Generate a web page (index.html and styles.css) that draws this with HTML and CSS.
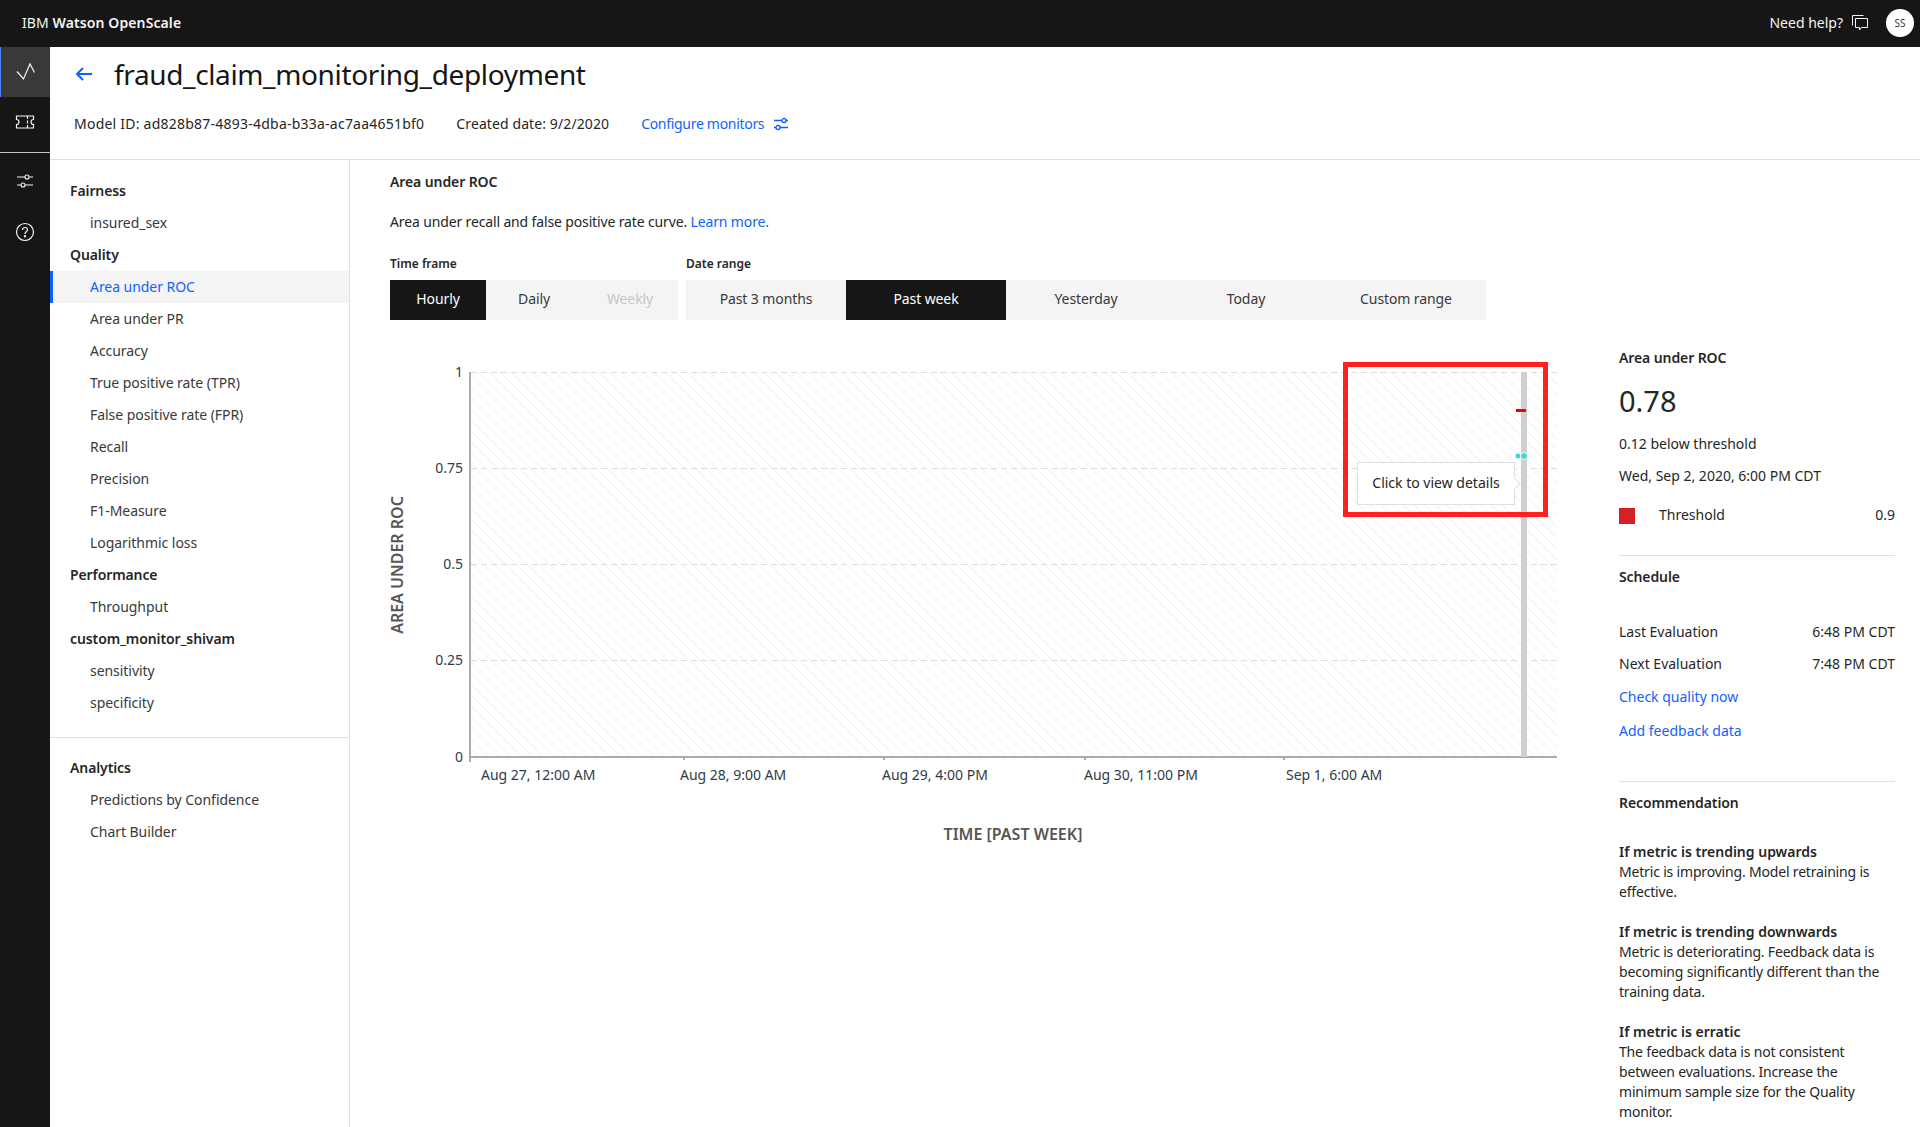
FILE: index.html
```html
<!DOCTYPE html>
<html lang="en">
<head>
  <meta charset="UTF-8">
  <title>IBM Watson OpenScale</title>
  <link rel="stylesheet" href="styles.css">
</head>
<body>

  <header class="topbar">
    <div class="brand">IBM <b>Watson OpenScale</b></div>
    <div class="help">
      <span>Need help?</span>
      <svg class="chat-icon" width="16" height="16" viewBox="0 0 16 16" fill="none" stroke="#f4f4f4">
        <path d="M.5 10.5V.5h11"/>
        <path d="M3.5 3.5h12v9h-6l-2 2.500v-2.500h-4z"/>
      </svg>
      <span class="avatar">SS</span>
    </div>
  </header>

  <div class="shell">
    <nav class="rail">
      <a class="rail-item active">
        <svg width="20" height="20" viewBox="0 0 20 20" fill="none" stroke="#f4f4f4" stroke-width="1.200"><path d="M1 9.500 7.500 17 14 2l4.500 8.500"/></svg>
      </a>
      <a class="rail-item">
        <svg width="20" height="20" viewBox="0 0 20 20" fill="none" stroke="#f4f4f4" stroke-width="1.200"><path d="M1.500 4h17v3.500a2.500 2.500 0 0 0 0 5V16h-17v-3.500a2.500 2.500 0 0 0 0-5z"/><path d="M12.500 4v3M12.500 8.500v3M12.500 13v3"/></svg>
      </a>
      <div class="rail-rule"></div>
      <a class="rail-item small">
        <svg width="20" height="20" viewBox="0 0 20 20" fill="none" stroke="#f4f4f4" stroke-width="1.100"><path d="M2 6h8M14 6h4M2 14h4M10 14h8"/><circle cx="12" cy="6" r="2"/><circle cx="8" cy="14" r="2"/></svg>
      </a>
      <a class="rail-item small">
        <svg width="20" height="20" viewBox="0 0 20 20" fill="none" stroke="#f4f4f4" stroke-width="1.200"><circle cx="10" cy="10" r="8.500"/><path d="M7.500 8c0-1.500 1.100-2.500 2.500-2.500s2.500 1 2.500 2.300c0 2-2.500 2-2.500 4.200"/><circle cx="10" cy="14.300" r=".6" fill="#f4f4f4"/></svg>
      </a>
    </nav>

    <div class="page">
      <section class="page-head">
        <div class="title-row">
          <svg class="back" width="18" height="16" viewBox="0 0 18 16" fill="none" stroke="#0f62fe" stroke-width="2"><path d="M17 8H2M8 2 2 8l6 6"/></svg>
          <h1>fraud_claim_monitoring_deployment</h1>
        </div>
        <div class="meta-row">
          <span class="model-id">Model ID: ad828b87-4893-4dba-b33a-ac7aa4651bf0</span>
          <span class="created">Created date: 9/2/2020</span>
          <a class="link config">Configure monitors
            <svg width="16" height="14" viewBox="0 0 16 14" fill="none" stroke="#0f62fe" stroke-width="1.300"><path d="M1 3.500h8M13 3.500h2M1 10.500h2M7 10.500h8"/><circle cx="11" cy="3.500" r="2"/><circle cx="5" cy="10.500" r="2"/></svg>
          </a>
        </div>
      </section>

      <div class="columns">
        <aside class="side-nav">
          <div class="nav-group">
            <div class="nav-head">Fairness</div>
            <a class="nav-link">insured_sex</a>
            <div class="nav-head">Quality</div>
            <a class="nav-link current">Area under ROC</a>
            <a class="nav-link">Area under PR</a>
            <a class="nav-link">Accuracy</a>
            <a class="nav-link">True positive rate (TPR)</a>
            <a class="nav-link">False positive rate (FPR)</a>
            <a class="nav-link">Recall</a>
            <a class="nav-link">Precision</a>
            <a class="nav-link">F1-Measure</a>
            <a class="nav-link">Logarithmic loss</a>
            <div class="nav-head">Performance</div>
            <a class="nav-link">Throughput</a>
            <div class="nav-head">custom_monitor_shivam</div>
            <a class="nav-link">sensitivity</a>
            <a class="nav-link">specificity</a>
          </div>
          <div class="nav-group second">
            <div class="nav-head">Analytics</div>
            <a class="nav-link">Predictions by Confidence</a>
            <a class="nav-link">Chart Builder</a>
          </div>
        </aside>

        <main class="content">
          <h2>Area under ROC</h2>
          <p class="intro">Area under recall and false positive rate curve. <a class="link">Learn more.</a></p>

          <div class="filters">
            <div class="filter">
              <div class="filter-label">Time frame</div>
              <div class="switcher">
                <button class="on">Hourly</button>
                <button>Daily</button>
                <button class="off">Weekly</button>
              </div>
            </div>
            <div class="filter">
              <div class="filter-label">Date range</div>
              <div class="switcher wide">
                <button>Past 3 months</button>
                <button class="on">Past week</button>
                <button>Yesterday</button>
                <button>Today</button>
                <button>Custom range</button>
              </div>
            </div>
          </div>

          <div class="chart-wrap">
            <svg class="chart" width="1229" height="530" viewBox="0 0 1229 530">
              <defs>
                <pattern id="hatch" width="11" height="11" patternUnits="userSpaceOnUse">
                  <path d="M-1 -1 12 12M-12 -1 1 12M10 -1 23 12" stroke="#efefef" stroke-width="1"/>
                </pattern>
              </defs>
              <rect x="80" y="0" width="1087" height="385" fill="url(#hatch)"/>

              <g class="grid">
                <path d="M81 .5H1167M81 96.500H1167M81 192.500H1167M81 288.500H1167"/>
              </g>

              <g class="axis">
                <path d="M80 0V390M79 385H1167"/>
                <path class="tick" d="M294 385v3M494 385v3M695 385v3M894 385v3"/>
              </g>

              <g class="y-labels">
                <text x="73" y="5">1</text>
                <text x="73" y="101">0.75</text>
                <text x="73" y="197">0.5</text>
                <text x="73" y="293">0.25</text>
                <text x="73" y="390">0</text>
              </g>

              <g class="x-labels">
                <text x="91" y="408">Aug 27, 12:00 AM</text>
                <text x="290" y="408">Aug 28, 9:00 AM</text>
                <text x="492" y="408">Aug 29, 4:00 PM</text>
                <text x="694" y="408">Aug 30, 11:00 PM</text>
                <text x="896" y="408">Sep 1, 6:00 AM</text>
              </g>

              <text class="axis-title" transform="translate(13 193) rotate(-90)">AREA UNDER ROC</text>
              <text class="axis-title" x="623" y="468">TIME [PAST WEEK]</text>

              <rect x="1131" y="0" width="6" height="385" fill="#cfcfcf"/>
              <rect x="1126" y="37" width="10" height="3" fill="#f00000"/>
              <circle cx="1128" cy="84" r="2.500" fill="#3ddbc9"/>
              <circle cx="1134" cy="84" r="3.500" fill="#3ddbc9" stroke="#fff" stroke-width="1"/>
            </svg>

            <div class="tip">Click to view details</div>
            <div class="callout"></div>
          </div>
        </main>

        <aside class="details">
          <h3>Area under ROC</h3>
          <div class="score">0.78</div>
          <p class="line">0.12 below threshold</p>
          <p class="line">Wed, Sep 2, 2020, 6:00 PM CDT</p>
          <div class="threshold">
            <span class="swatch"></span>
            <span class="grow">Threshold</span>
            <span>0.9</span>
          </div>

          <div class="block">
            <h3>Schedule</h3>
            <div class="kv first"><span>Last Evaluation</span><span>6:48 PM CDT</span></div>
            <div class="kv"><span>Next Evaluation</span><span>7:48 PM CDT</span></div>
            <a class="link action">Check quality now</a>
            <a class="link action">Add feedback data</a>
          </div>

          <div class="block rec">
            <h3>Recommendation</h3>
            <div class="note">
              <b>If metric is trending upwards</b>
              Metric is improving. Model retraining is effective.
            </div>
            <div class="note">
              <b>If metric is trending downwards</b>
              Metric is deteriorating. Feedback data is becoming significantly different than the training data.
            </div>
            <div class="note">
              <b>If metric is erratic</b>
              The feedback data is not consistent between evaluations. Increase the minimum sample size for the Quality monitor.
            </div>
          </div>
        </aside>
      </div>
    </div>
  </div>

</body>
</html>
```

FILE: styles.css
```css
* {
  box-sizing: border-box;
}
html, body {
  height: 100%;
}
body {
  margin: 0;
  overflow: hidden;
  font-family: "Noto Sans", "Open Sans", sans-serif;
  font-size: 14px;
  line-height: 20px;
  color: #262626;
  background: #fff;
}
h1, h2, h3, p {
  margin: 0;
}
.link {
  color: #0f62fe;
}

/* top bar */
.topbar {
  height: 47px;
  display: flex;
  align-items: center;
  justify-content: space-between;
  padding: 0 6px 2px 22px;
  background: #161616;
  color: #f4f4f4;
}
.brand {
  letter-spacing: .1px;
}
.brand b {
  font-weight: 600;
}
.help {
  display: flex;
  align-items: center;
}
.chat-icon {
  margin: 0 18px 0 9px;
}
.avatar {
  width: 28px;
  height: 28px;
  border-radius: 50%;
  background: #fff;
  color: #393939;
  font-size: 10px;
  text-align: center;
  line-height: 28px;
}

/* layout */
.shell {
  display: flex;
  height: 1080px;
}
.rail {
  width: 50px;
  flex: none;
  background: #161616;
}
.rail-item {
  display: flex;
  align-items: center;
  justify-content: center;
  height: 50px;
}
.rail-item.active {
  background: #393939;
  border-left: 1px solid #4589ff;
}
.rail-item.small {
  height: 51px;
}
.rail-rule {
  height: 1px;
  margin: 5px 0 2px;
  background: #c6c6c6;
}
.page {
  flex: 1;
  min-width: 0;
}

/* page head */
.page-head {
  height: 113px;
  padding: 8px 0 0 24px;
  border-bottom: 1px solid #e0e0e0;
}
.title-row {
  display: flex;
  align-items: center;
  height: 38px;
}
.back {
  margin-left: 1px;
  margin-right: 21px;
}
h1 {
  font-size: 28px;
  line-height: 38px;
  font-weight: 400;
  letter-spacing: -.36px;
  color: #161616;
}
.meta-row {
  display: flex;
  align-items: center;
  gap: 32px;
  margin-top: 21px;
  font-size: 14px;
}
.model-id {
  letter-spacing: .23px;
}
.created {
  letter-spacing: .1px;
}
.config {
  display: flex;
  align-items: center;
  gap: 9px;
  letter-spacing: -.3px;
}

/* columns */
.columns {
  display: flex;
  height: 967px;
}
.side-nav {
  width: 300px;
  flex: none;
  padding-top: 15px;
  border-right: 1px solid #e0e0e0;
}
.nav-group {
  padding-bottom: 18px;
}
.nav-group.second {
  padding-top: 14px;
  border-top: 1px solid #e0e0e0;
}
.nav-head {
  height: 32px;
  padding-left: 20px;
  line-height: 32px;
  font-weight: 600;
  letter-spacing: -.1px;
}
.nav-link {
  display: block;
  height: 32px;
  padding-left: 40px;
  line-height: 32px;
  letter-spacing: -.05px;
  color: #393939;
}
.nav-link.current {
  margin-right: 0;
  padding-left: 37px;
  border-left: 3px solid #0f62fe;
  background: #f4f4f4;
  color: #0f62fe;
}

/* main column */
.content {
  width: 1269px;
  flex: none;
  padding: 12px 0 0 40px;
}
h2 {
  font-size: 14px;
  font-weight: 600;
  letter-spacing: -.1px;
}
.intro {
  margin-top: 20px;
  letter-spacing: -.14px;
}
.filters {
  display: flex;
  gap: 8px;
  margin-top: 24px;
}
.filter-label {
  margin-bottom: 8px;
  font-size: 12px;
  line-height: 16px;
  font-weight: 600;
}
.switcher {
  display: flex;
  background: #f4f4f4;
}
.switcher button {
  width: 96px;
  height: 40px;
  padding: 0 0 2px;
  border: 0;
  background: none;
  font: inherit;
  letter-spacing: -.1px;
  color: #393939;
}
.switcher.wide button {
  width: 160px;
}
.switcher button.on {
  background: #161616;
  color: #fff;
}
.switcher button.off {
  color: #c6c6c6;
}

/* chart */
.chart-wrap {
  position: relative;
  margin-top: 52px;
}
.chart {
  display: block;
  overflow: visible;
}
.grid path {
  fill: none;
  stroke: #dcdcdc;
  stroke-width: 1;
  stroke-dasharray: 6 4;
}
.axis path {
  fill: none;
  stroke: #ababab;
  stroke-width: 2;
}
.y-labels text {
  font-size: 14px;
  fill: #2f3b46;
  text-anchor: end;
}
.x-labels text {
  font-size: 14px;
  fill: #2f3b46;
}
.axis-title {
  font-size: 16px;
  font-weight: 600;
  fill: #565656;
  text-anchor: middle;
}
.tip {
  position: absolute;
  left: 967px;
  top: 90px;
  width: 158px;
  height: 43px;
  border: 1px solid #e0e0e0;
  background: #fff;
  line-height: 40px;
  text-align: center;
}
.tip::after {
  content: "";
  position: absolute;
  right: -5px;
  top: 16px;
  width: 8px;
  height: 8px;
  background: #fff;
  border-top: 1px solid #e0e0e0;
  border-right: 1px solid #e0e0e0;
  transform: rotate(45deg);
}
.callout {
  position: absolute;
  left: 953px;
  top: -10px;
  width: 205px;
  height: 155px;
  border: 5px solid #ff2020;
}

/* right column */
.details {
  width: 276px;
  flex: none;
  padding-top: 188px;
  margin-left: 0;
}
.details h3 {
  font-size: 14px;
  line-height: 20px;
  font-weight: 600;
  letter-spacing: -.1px;
}
.score {
  margin-top: 13px;
  font-size: 29px;
  line-height: 40px;
  color: #262626;
}
.line {
  margin-top: 12px;
}
.details .score + .line {
  margin-top: 13px;
}
.threshold {
  display: flex;
  align-items: center;
  margin-top: 19px;
}
.swatch {
  width: 16px;
  height: 16px;
  margin-top: 2px;
  margin-right: 24px;
  background: #da1e28;
}
.grow {
  flex: 1;
}
.block {
  margin-top: 30px;
  padding-top: 11px;
  border-top: 1px solid #e0e0e0;
}
.kv {
  display: flex;
  justify-content: space-between;
  margin-top: 12px;
}
.kv.first {
  margin-top: 35px;
}
.action {
  display: block;
  margin-top: 13px;
}
.action + .action {
  margin-top: 14px;
}
.block.rec {
  margin-top: 40px;
}
.note {
  margin-top: 20px;
  letter-spacing: -.18px;
}
.rec h3 + .note {
  margin-top: 29px;
}
.note b {
  display: block;
  font-weight: 600;
  letter-spacing: 0;
}
```
